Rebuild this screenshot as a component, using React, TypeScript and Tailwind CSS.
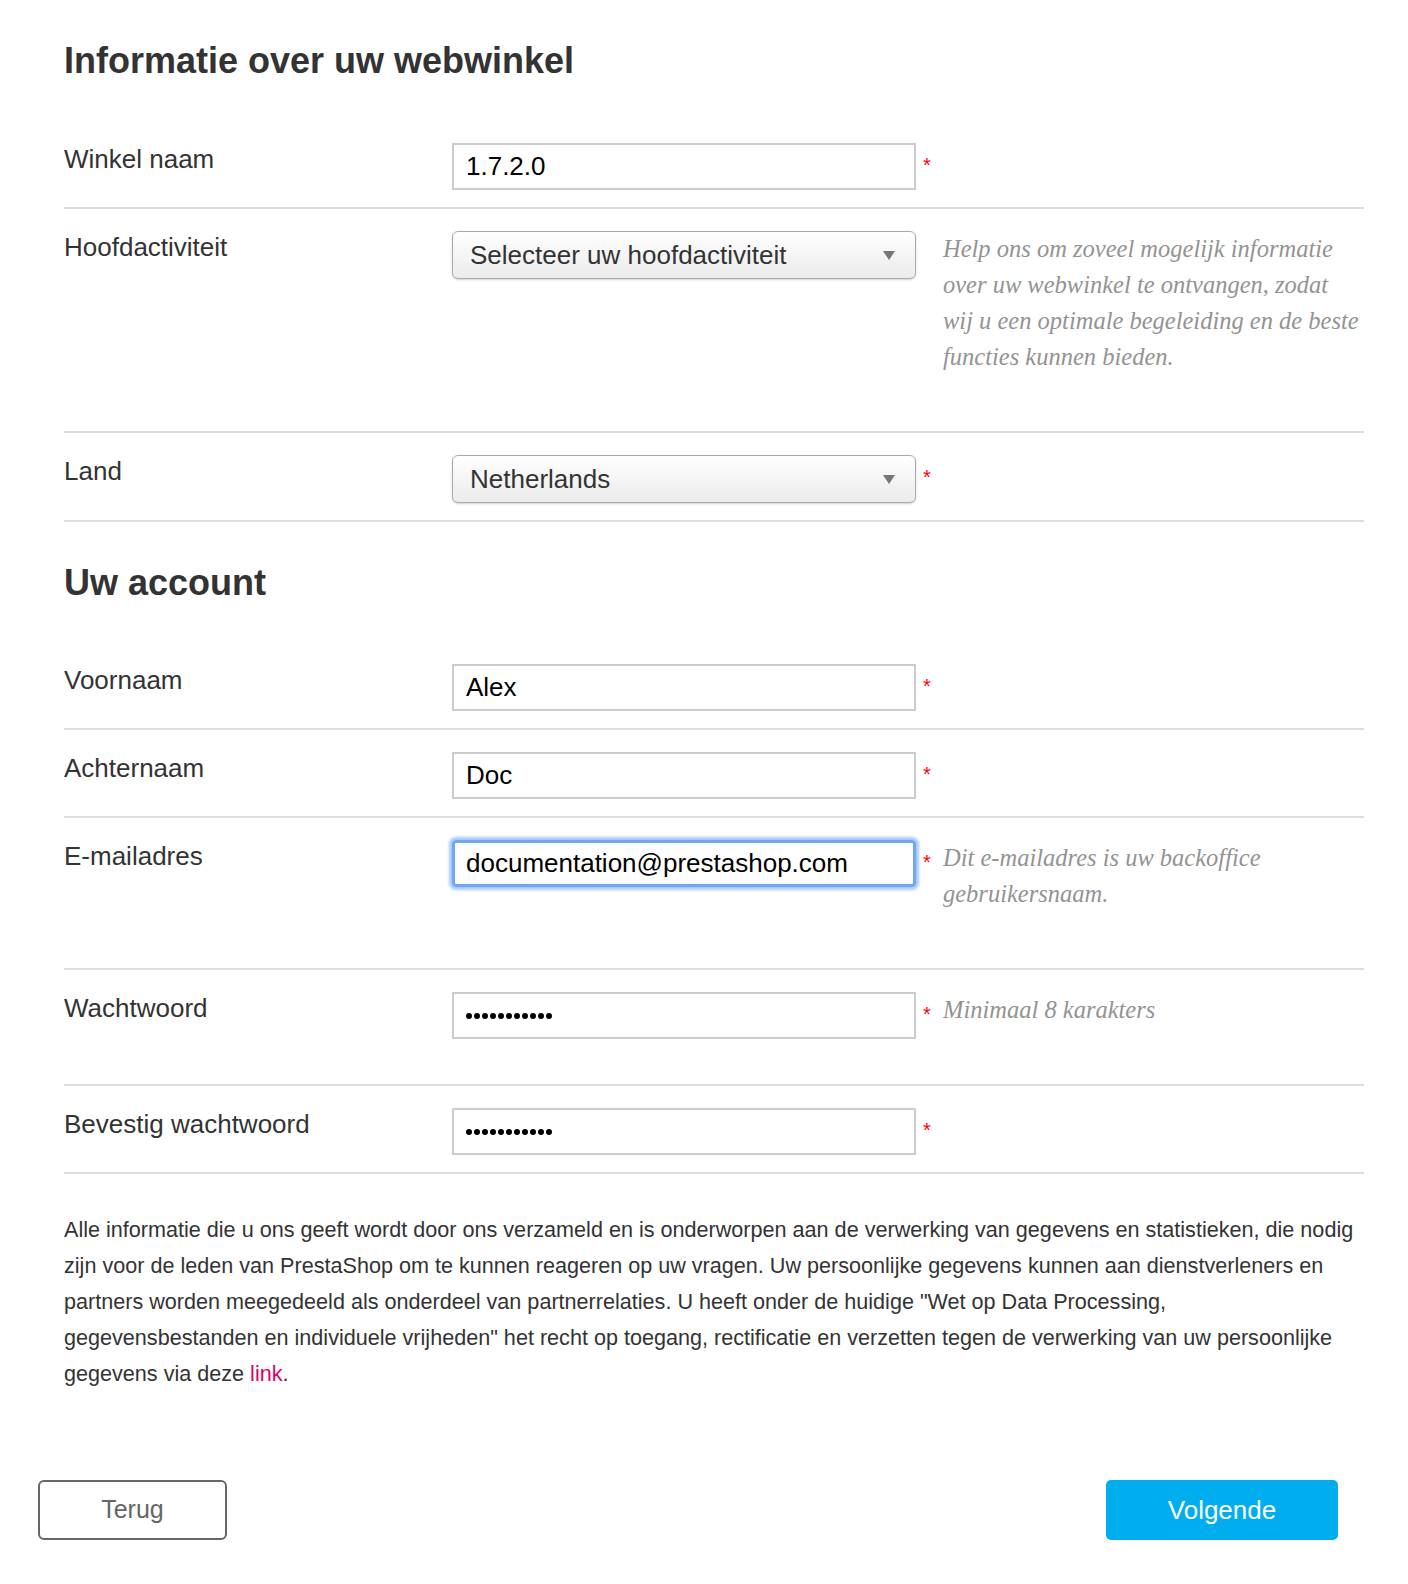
import type { ReactNode } from 'react';

const labelCls = "text-[26px] leading-[32px] text-[#333]";
const helpCls = "mb-[39px] font-['Liberation_Serif',Georgia,serif] italic text-[24.5px] leading-[36px] text-[#939393]";

function Asterisk() {
  return <span className="block pt-[12px] text-[20px] leading-[20px] text-[#ff0000]">*</span>;
}

function Row({ label, children, required = true, help }: { label: string; children: ReactNode; required?: boolean; help?: ReactNode }) {
  return (
    <div className="grid grid-cols-[388px_464px_27px_1fr] border-b-2 border-[#dddddd] pt-[22px] pb-[17px]">
      <div className={labelCls}>{label}</div>
      <div>{children}</div>
      <div className="pl-[7px]">{required && <Asterisk />}</div>
      <div>{help && <p className={helpCls}>{help}</p>}</div>
    </div>
  );
}

function TextBox({ value, focused = false }: { value: string; focused?: boolean }) {
  if (focused) {
    return (
      <div className="flex h-[47px] items-center rounded-[4px] border-[3px] border-[#6fa8f2] pl-[11px] text-[26px] text-black shadow-[0_0_3px_3px_#a6c9f8]">
        {value}
      </div>
    );
  }
  return (
    <div className="flex h-[47px] items-center border-2 border-[#cccccc] pl-[12px] text-[26px] text-black">
      {value}
    </div>
  );
}

function PasswordBox() {
  return (
    <div className="flex h-[47px] items-center gap-[2px] border-2 border-[#cccccc] pl-[12px]">
      {Array.from({ length: 11 }).map((_, i) => (
        <span key={i} className="h-[6px] w-[6px] rounded-full bg-black" />
      ))}
    </div>
  );
}

function SelectBox({ value }: { value: string }) {
  return (
    <div className="relative flex h-[48px] items-center rounded-[6px] border-[1.5px] border-[#a9a9a9] bg-linear-to-b from-white to-[#ebebeb] pl-[17px] text-[26px] text-[#333] shadow-[0_1px_2px_rgba(0,0,0,0.18)]">
      <span>{value}</span>
      <svg className="absolute right-[20px] top-[19px]" width="12" height="9" viewBox="0 0 12 9">
        <path d="M0 0H12L6 9Z" fill="#777" />
      </svg>
    </div>
  );
}

export default function App() {
  return (
    <div className="min-h-[1584px] w-[1408px] bg-white font-['Liberation_Sans',Arial,sans-serif]">
      <div className="pl-[64px] pr-[44px] pt-[41px]">
        <h1 className="mb-[40px] text-[36px] font-bold leading-[40px] text-[#333]">Informatie over uw webwinkel</h1>

        <Row label="Winkel naam">
          <TextBox value="1.7.2.0" />
        </Row>
        <Row
          label="Hoofdactiviteit"
          required={false}
          help={
            <>
              Help ons om zoveel mogelijk informatie<br />
              over uw webwinkel te ontvangen, zodat<br />
              wij u een optimale begeleiding en de beste<br />
              functies kunnen bieden.
            </>
          }
        >
          <SelectBox value="Selecteer uw hoofdactiviteit" />
        </Row>
        <Row label="Land">
          <SelectBox value="Netherlands" />
        </Row>

        <h2 className="mb-[39px] mt-[41px] text-[36px] font-bold leading-[40px] text-[#333]">Uw account</h2>

        <Row label="Voornaam">
          <TextBox value="Alex" />
        </Row>
        <Row label="Achternaam">
          <TextBox value="Doc" />
        </Row>
        <Row
          label="E-mailadres"
          help={
            <>
              Dit e-mailadres is uw backoffice<br />
              gebruikersnaam.
            </>
          }
        >
          <TextBox value="documentation@prestashop.com" focused />
        </Row>
        <Row label="Wachtwoord" help="Minimaal 8 karakters">
          <PasswordBox />
        </Row>
        <Row label="Bevestig wachtwoord">
          <PasswordBox />
        </Row>

        <p className="mt-[38px] whitespace-nowrap text-[21.6px] leading-[36px] text-[#333]">
          Alle informatie die u ons geeft wordt door ons verzameld en is onderworpen aan de verwerking van gegevens en statistieken, die nodig<br />
          zijn voor de leden van PrestaShop om te kunnen reageren op uw vragen. Uw persoonlijke gegevens kunnen aan dienstverleners en<br />
          partners worden meegedeeld als onderdeel van partnerrelaties. U heeft onder de huidige "Wet op Data Processing,<br />
          gegevensbestanden en individuele vrijheden" het recht op toegang, rectificatie en verzetten tegen de verwerking van uw persoonlijke<br />
          gegevens via deze <a className="text-[#df0067]">link</a>.
        </p>
      </div>

      <div className="flex items-start justify-between pb-[42px] pl-[38px] pr-[70px] pt-[88px]">
        <button className="flex h-[60px] w-[189px] items-center justify-center rounded-[6px] border-2 border-[#666] text-[25px] text-[#666]">
          Terug
        </button>
        <button className="flex h-[60px] w-[232px] items-center justify-center rounded-[5px] bg-[#00aeef] text-[26px] text-white">
          Volgende
        </button>
      </div>
    </div>
  );
}
